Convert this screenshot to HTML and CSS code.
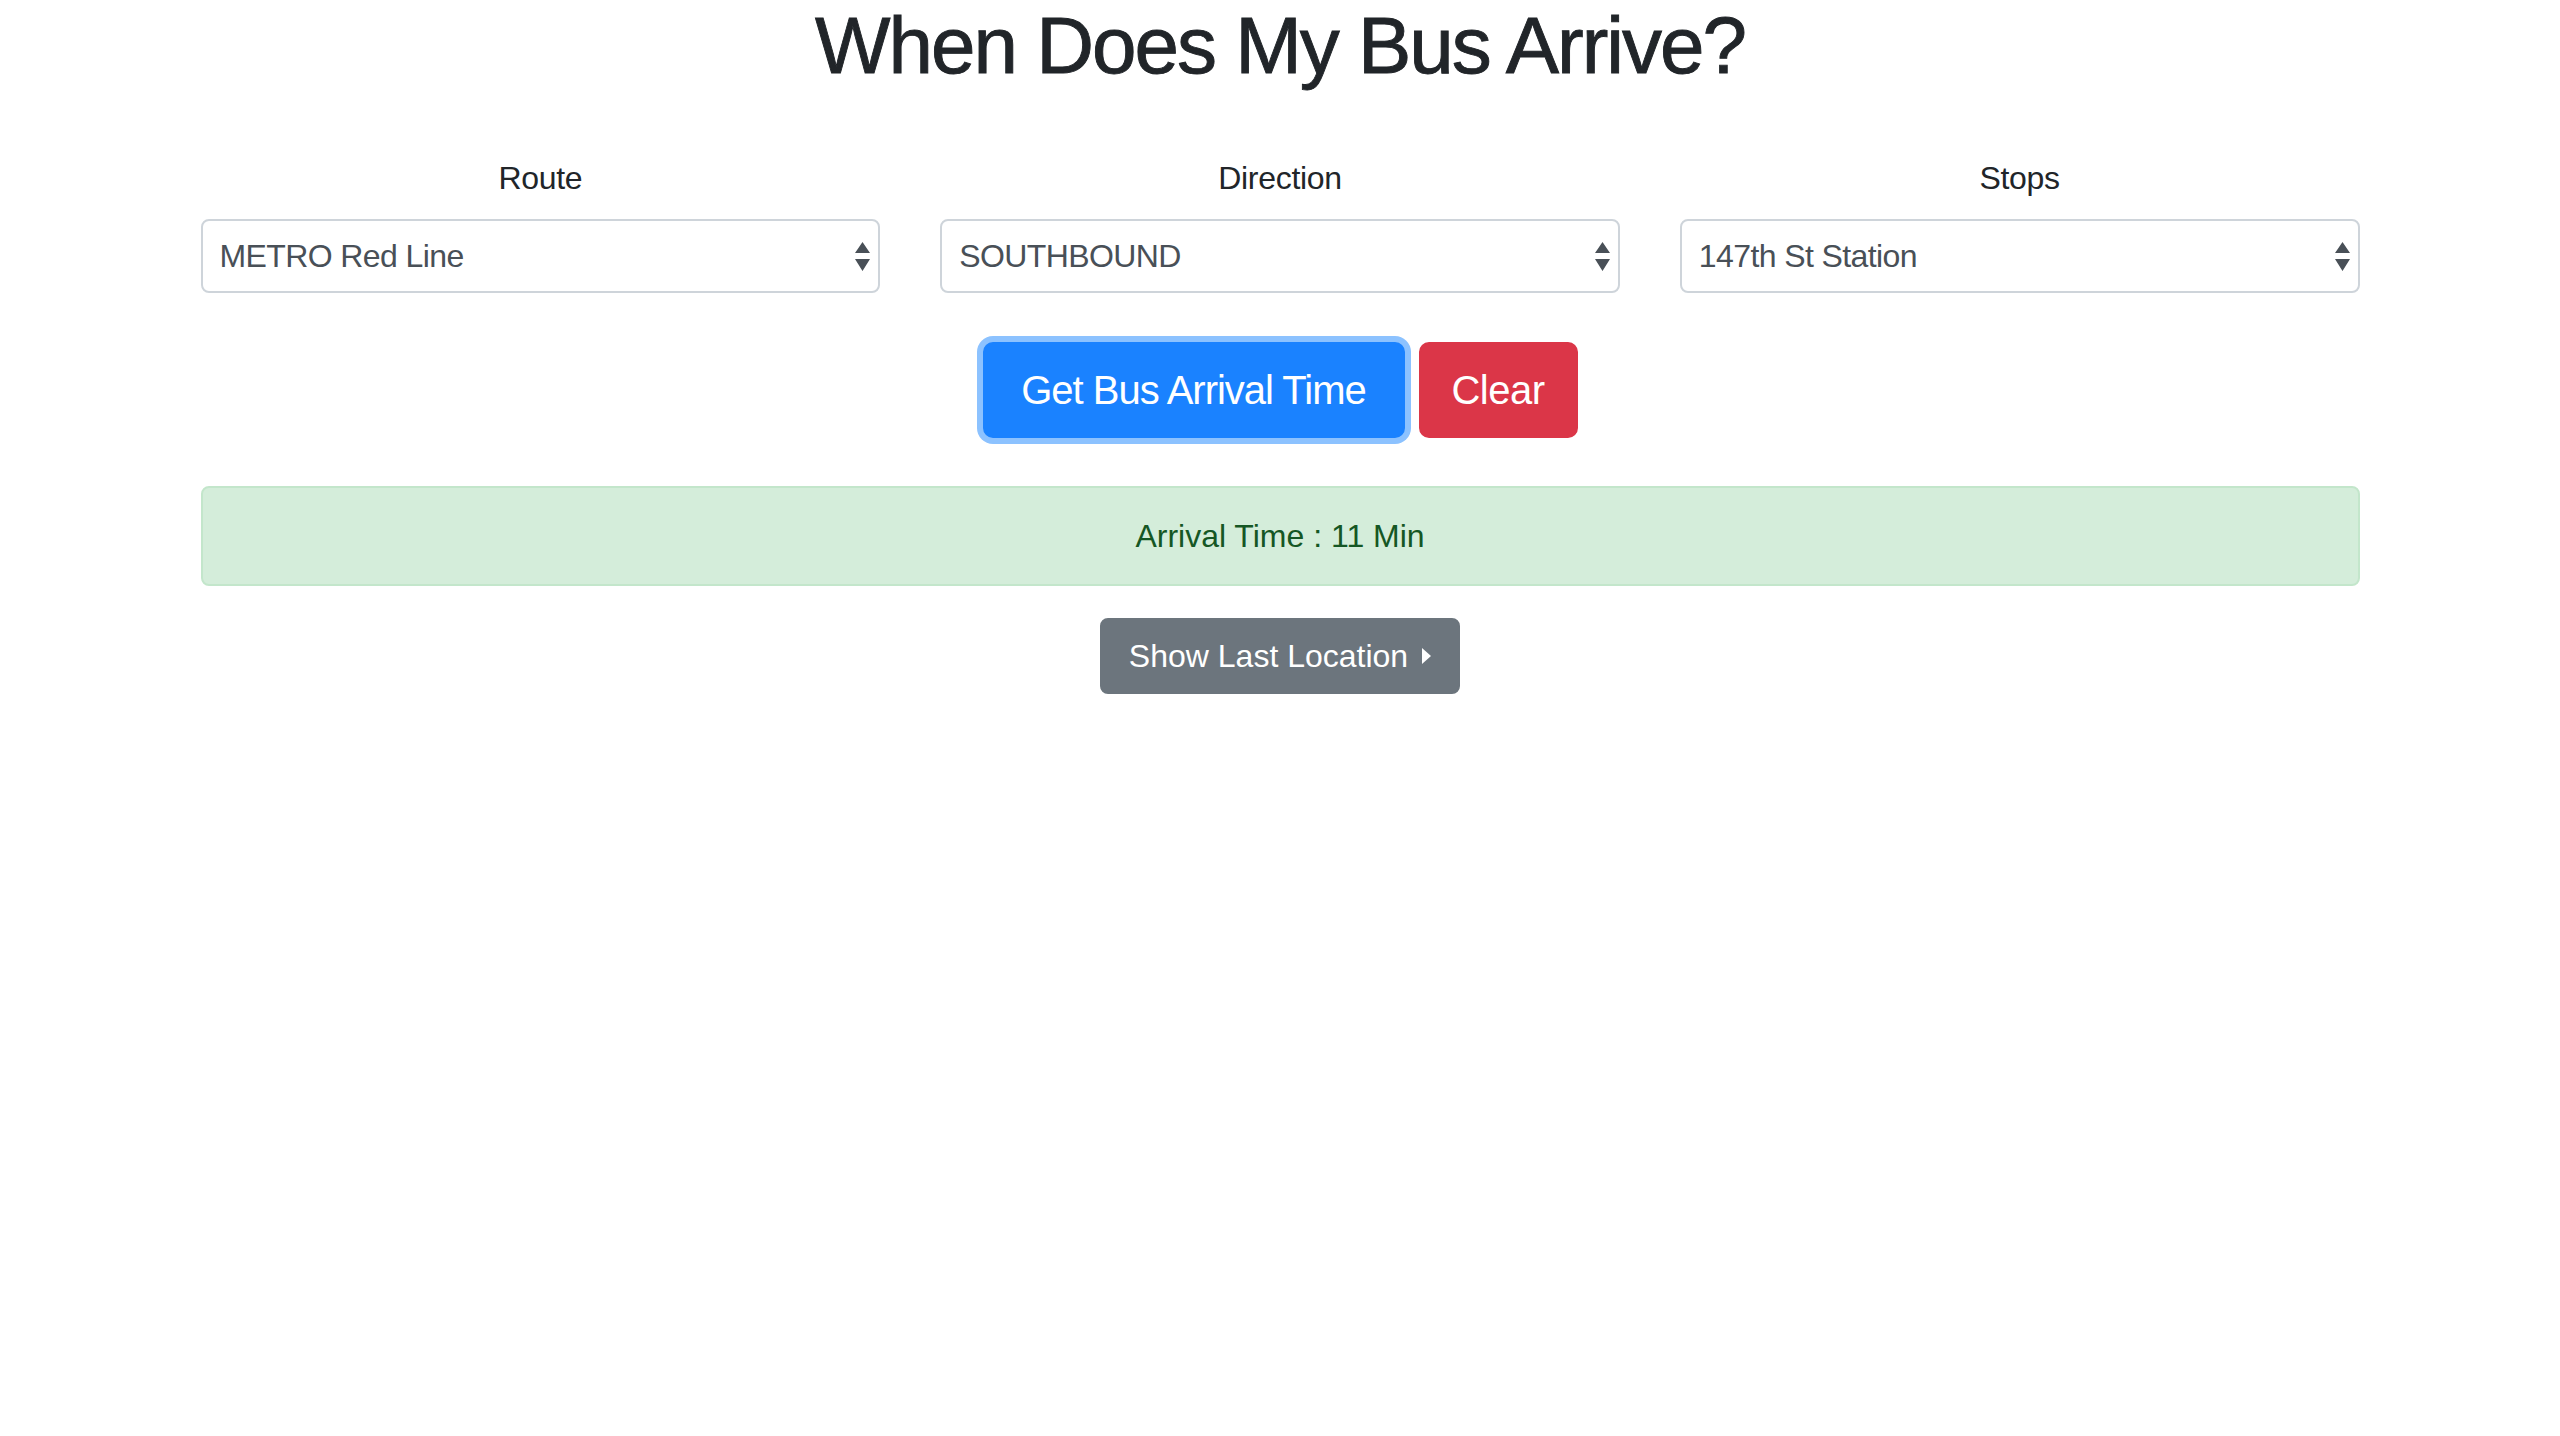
FILE: index.html
```html
<!DOCTYPE html>
<html lang="en">
<head>
<meta charset="utf-8">
<title>When Does My Bus Arrive?</title>
<link rel="stylesheet" href="styles.css">
</head>
<body>
<main class="page">
  <h1 class="title">When Does My Bus Arrive?</h1>
  <form class="fields">
    <div class="field">
      <label class="field-label" for="route">Route</label>
      <div class="select-wrap">
        <select id="route" class="select"><option>METRO Red Line</option></select>
        <svg class="select-arrows" width="15" height="29" viewBox="0 0 15 29" aria-hidden="true"><path d="M7.5 0 L15 11 L0 11 Z M0 17 L15 17 L7.5 29 Z" fill="#495057"/></svg>
      </div>
    </div>
    <div class="field">
      <label class="field-label" for="direction">Direction</label>
      <div class="select-wrap">
        <select id="direction" class="select"><option>SOUTHBOUND</option></select>
        <svg class="select-arrows" width="15" height="29" viewBox="0 0 15 29" aria-hidden="true"><path d="M7.5 0 L15 11 L0 11 Z M0 17 L15 17 L7.5 29 Z" fill="#495057"/></svg>
      </div>
    </div>
    <div class="field">
      <label class="field-label" for="stops">Stops</label>
      <div class="select-wrap">
        <select id="stops" class="select"><option>147th St Station</option></select>
        <svg class="select-arrows" width="15" height="29" viewBox="0 0 15 29" aria-hidden="true"><path d="M7.5 0 L15 11 L0 11 Z M0 17 L15 17 L7.5 29 Z" fill="#495057"/></svg>
      </div>
    </div>
  </form>
  <div class="actions">
    <button type="button" class="btn btn-lg btn-primary">Get Bus Arrival Time</button>
    <button type="button" class="btn btn-lg btn-danger">Clear</button>
  </div>
  <div class="alert">Arrival Time : 11 Min</div>
  <div class="more">
    <button type="button" class="btn btn-secondary">Show Last Location<svg class="caret" width="9" height="16" viewBox="0 0 9 16" aria-hidden="true"><path d="M0 0 L9 8 L0 16 Z" fill="#fff"/></svg></button>
  </div>
</main>
</body>
</html>
```

FILE: styles.css
```css
* {
  box-sizing: border-box;
}

body {
  margin: 0;
  background: #fff;
  color: #212529;
  font-family: "Liberation Sans", Arial, Helvetica, sans-serif;
  font-size: 32px;
  line-height: 48px;
}

.page {
  width: 2159px;
  margin: 0 auto;
}

.title {
  margin: 0;
  font-size: 80px;
  line-height: 92px;
  font-weight: 400;
  text-align: center;
  color: #212529;
  letter-spacing: -2px;
  -webkit-text-stroke: 0.9px #212529;
}

.fields {
  display: grid;
  grid-template-columns: repeat(3, 1fr);
  column-gap: 60px;
  margin: 62px 0 0;
}

.field-label {
  display: block;
  text-align: center;
  font-size: 32px;
  line-height: 48px;
  margin-bottom: 17px;
  color: #212529;
  letter-spacing: -0.3px;
}

.select-wrap {
  position: relative;
}

.select {
  display: block;
  width: 100%;
  height: 74px;
  margin: 0;
  padding: 0 40px 0 17px;
  border: 2px solid #ced4da;
  border-radius: 8px;
  background: #fff;
  color: #495057;
  font-family: inherit;
  font-size: 32px;
  line-height: 48px;
  letter-spacing: -0.6px;
  -webkit-appearance: none;
  appearance: none;
}

.select-arrows {
  position: absolute;
  right: 10px;
  top: 23px;
  pointer-events: none;
}

.actions {
  display: flex;
  justify-content: center;
  gap: 14px;
  margin-top: 49px;
}

.btn {
  display: inline-flex;
  align-items: center;
  justify-content: center;
  border: 2px solid transparent;
  color: #fff;
  font-family: inherit;
  white-space: nowrap;
  cursor: pointer;
}

.btn-lg {
  height: 96px;
  padding: 0;
  font-size: 40px;
  border-radius: 10px;
}

.btn-primary {
  width: 422px;
  background: #1a82ff;
  border-color: #1a82ff;
  box-shadow: 0 0 0 6px #8cc2ff;
  letter-spacing: -1px;
}

.btn-danger {
  width: 159px;
  background: #db3648;
  border-color: #db3648;
  letter-spacing: -0.5px;
}

.alert {
  display: flex;
  align-items: center;
  justify-content: center;
  height: 100px;
  margin: 48px 0 32px;
  background: #d4edda;
  border: 2px solid #c3e6cb;
  border-radius: 8px;
  color: #155724;
  font-size: 32px;
}

.more {
  display: flex;
  justify-content: center;
}

.btn-secondary {
  width: 360px;
  height: 76px;
  padding: 0;
  font-size: 32px;
  border-radius: 8px;
  background: #6c757d;
  border-color: #6c757d;
}

.caret {
  margin-left: 14px;
}
```
